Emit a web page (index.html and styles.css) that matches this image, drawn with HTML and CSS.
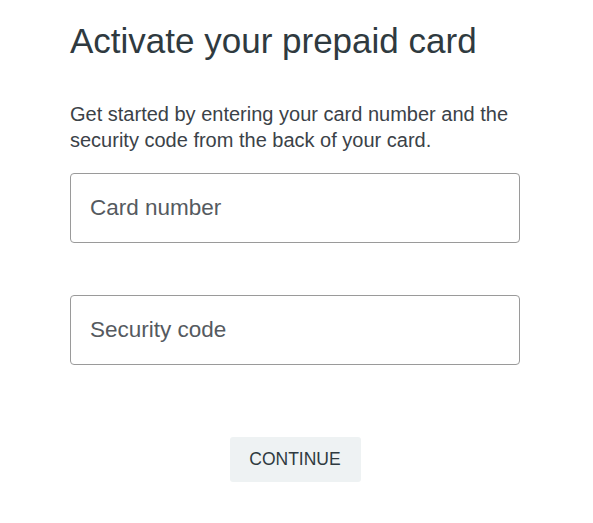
FILE: index.html
```html
<!DOCTYPE html>
<html lang="en">
<head>
    <meta charset="UTF-8">
    <title>Activate your prepaid card</title>
    <link rel="stylesheet" href="styles.css">
</head>
<body>
<div class="activate">
    <h1 class="activate-title">Activate your prepaid card</h1>
    <p class="activate-desc">Get started by entering your card number and the security code from the back of your card.</p>
    <form class="activate-form">
        <input class="field" type="text" placeholder="Card number">
        <input class="field" type="text" placeholder="Security code">
        <div class="actions">
            <button type="button" class="btn-continue">CONTINUE</button>
        </div>
    </form>
</div>
</body>
</html>
```

FILE: styles.css
```css
/* reset */
body,div,h1,p,form,input,button{margin:0;padding:0}
html,body{width:100%;height:100%}
body{font-family:'Liberation Sans',Arial,sans-serif;color:#333;background:#fff}
button{border:0 none;cursor:pointer;font-family:inherit}
/* //reset */
.activate{
    width:450px;
    padding:21px 0 0 70px;
}
.activate-title{
    font-size:35px;
    font-weight:normal;
    line-height:40px;
    color:#2f3a40;
}
.activate-desc{
    margin-top:40px;
    font-size:20px;
    line-height:26px;
    color:#3b4248;
}
.activate-form{
    display:flex;
    flex-direction:column;
    gap:52px;
    margin-top:20px;
}
.field{
    box-sizing:border-box;
    width:450px;
    height:70px;
    padding:0 19px;
    border:1px solid #9a9a9a;
    border-radius:4px;
    font-family:inherit;
    font-size:22.5px;
    color:#333;
}
.field::placeholder{
    color:#555a60;
    opacity:1;
}
.actions{
    display:flex;
    justify-content:center;
    margin-top:20px;
}
.btn-continue{
    width:131px;
    height:45px;
    border-radius:3px;
    background-color:#eef2f3;
    font-size:17.5px;
    color:#2f3a40;
}
```
